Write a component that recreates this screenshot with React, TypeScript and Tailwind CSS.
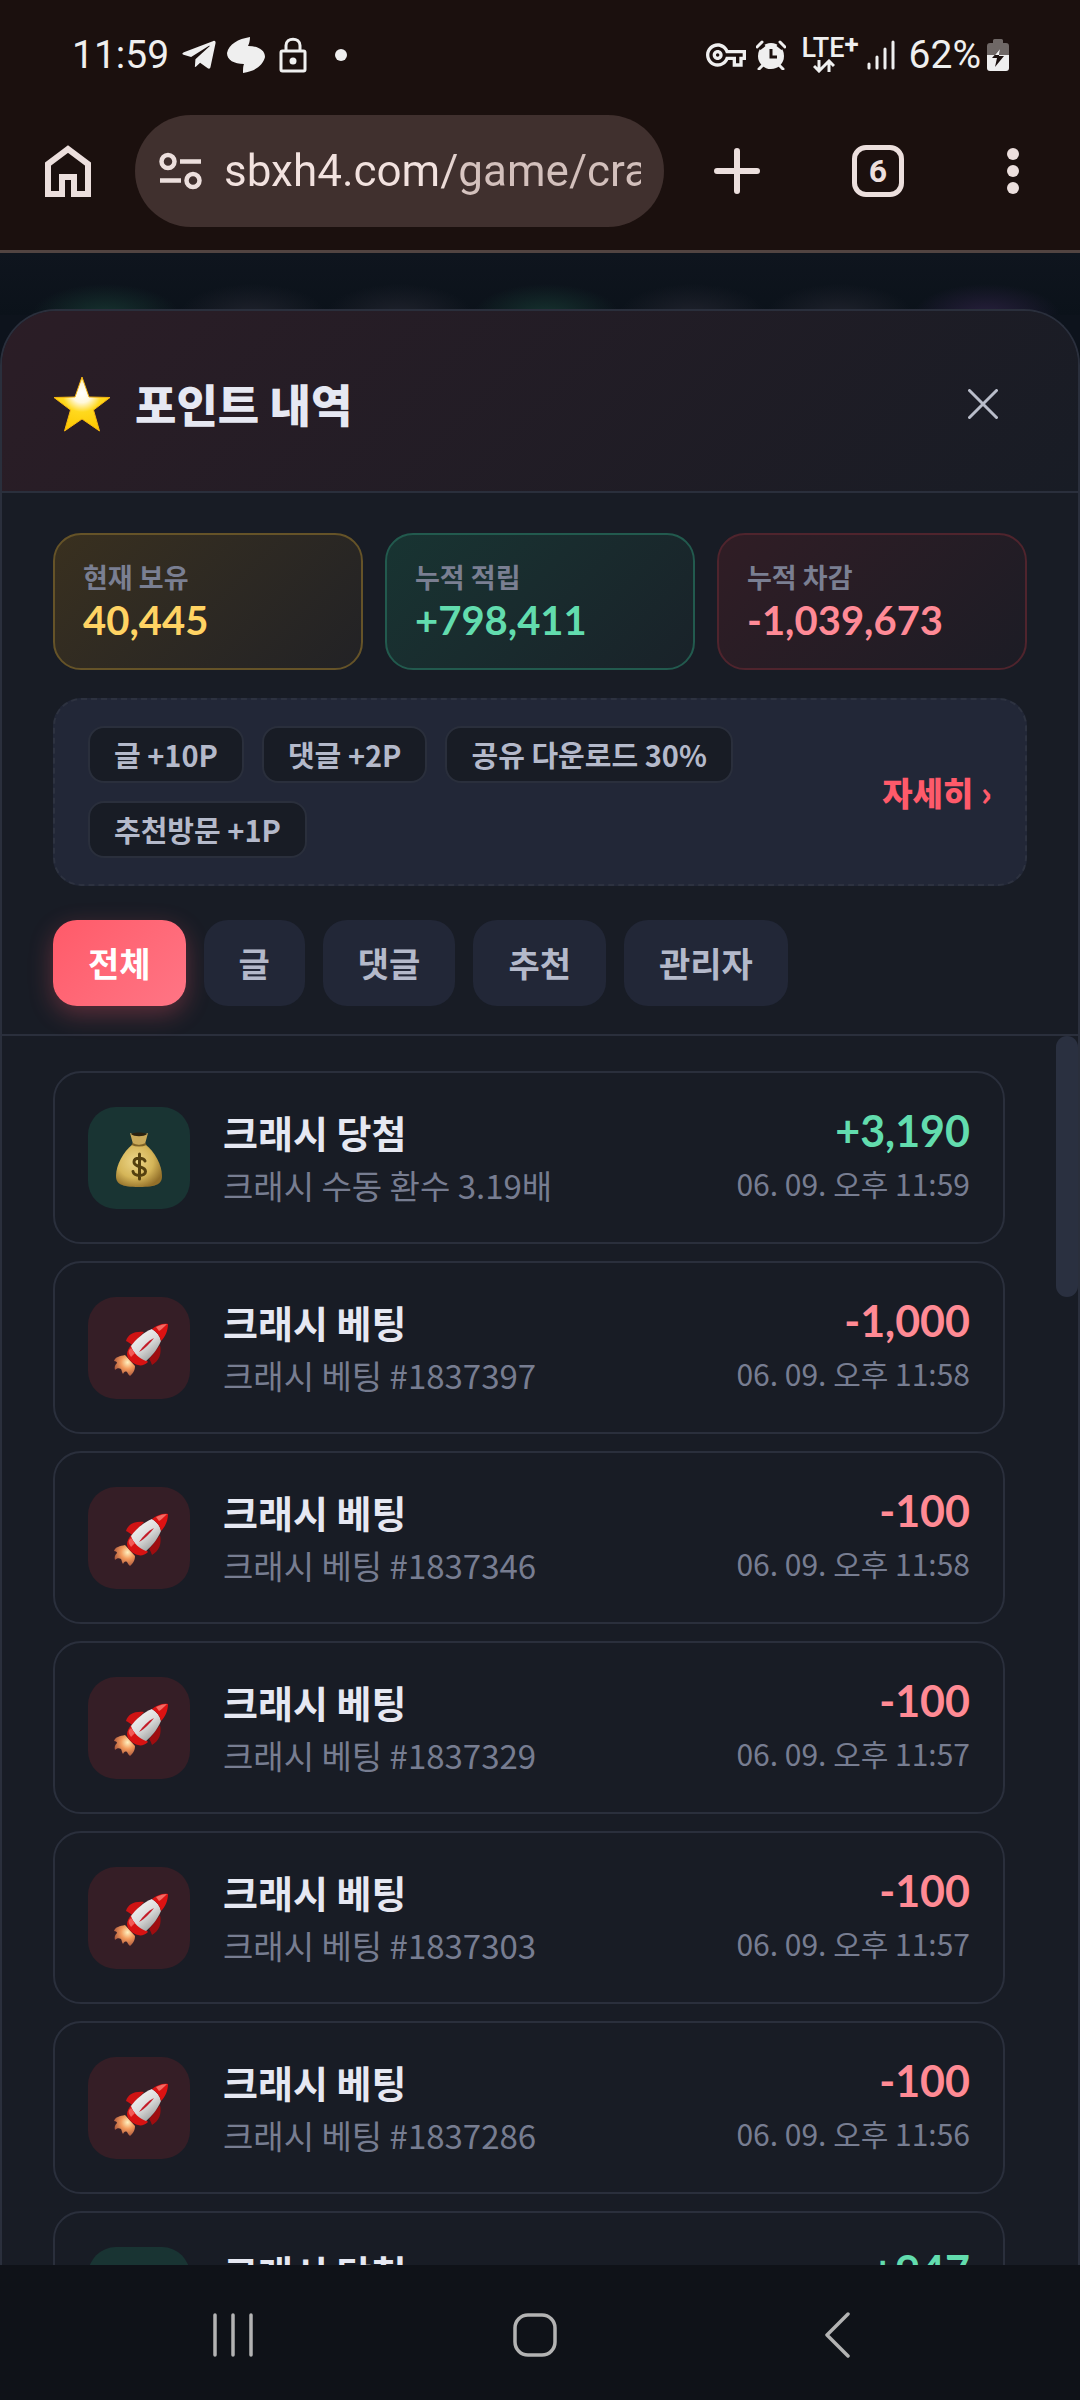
import React, { useState } from 'react';
import { FaTelegramPlane } from 'react-icons/fa';
import { MdOutlineVpnKey } from 'react-icons/md';

type Entry = {
  id: number;
  kind: 'win' | 'bet';
  title: string;
  detail: string;
  amount: string;
  time: string;
};

const entries: Entry[] = [
  { id: 1, kind: 'win', title: '크래시 당첨', detail: '크래시 수동 환수 3.19배', amount: '+3,190', time: '06. 09. 오후 11:59' },
  { id: 2, kind: 'bet', title: '크래시 베팅', detail: '크래시 베팅 #1837397', amount: '-1,000', time: '06. 09. 오후 11:58' },
  { id: 3, kind: 'bet', title: '크래시 베팅', detail: '크래시 베팅 #1837346', amount: '-100', time: '06. 09. 오후 11:58' },
  { id: 4, kind: 'bet', title: '크래시 베팅', detail: '크래시 베팅 #1837329', amount: '-100', time: '06. 09. 오후 11:57' },
  { id: 5, kind: 'bet', title: '크래시 베팅', detail: '크래시 베팅 #1837303', amount: '-100', time: '06. 09. 오후 11:57' },
  { id: 6, kind: 'bet', title: '크래시 베팅', detail: '크래시 베팅 #1837286', amount: '-100', time: '06. 09. 오후 11:56' },
  { id: 7, kind: 'win', title: '크래시 당첨', detail: '크래시 수동 환수 9.47배', amount: '+947', time: '06. 09. 오후 11:56' },
];

const stats = [
  {
    label: '현재 보유',
    value: '40,445',
    box: 'border-[#655328] bg-linear-135 from-[#39301f] to-[#222225]',
    text: 'text-[#ffd363]',
  },
  {
    label: '누적 적립',
    value: '+798,411',
    box: 'border-[#225a4e] bg-linear-135 from-[#183432] to-[#192229]',
    text: 'text-[#62dcae]',
  },
  {
    label: '누적 차감',
    value: '-1,039,673',
    box: 'border-[#4f242d] bg-linear-135 from-[#301d25] to-[#1c1c25]',
    text: 'text-[#ff8a96]',
  },
];

const rules = ['글 +10P', '댓글 +2P', '공유 다운로드 30%', '추천방문 +1P'];
const tabs = ['전체', '글', '댓글', '추천', '관리자'];

const StarIcon: React.FC = () => (
  <svg viewBox="0 0 58 56" className="h-14 w-[58px]" aria-hidden="true">
    <defs>
      <radialGradient id="starFill" cx="0.5" cy="0.3" r="0.7">
        <stop offset="0" stopColor="#ffffff" />
        <stop offset="0.25" stopColor="#fff8dc" />
        <stop offset="0.5" stopColor="#ffd91e" />
        <stop offset="1" stopColor="#fdc800" />
      </radialGradient>
    </defs>
    <path
      d="M29 1 L36 21 L57 21.500 L40.500 34 L46.500 55 L29 43 L11.500 55 L17.500 34 L1 21.500 L22 21 Z"
      fill="url(#starFill)"
      stroke="#f5b512"
      strokeWidth="1"
      strokeLinejoin="round"
    />
  </svg>
);

const MoneyBagIcon: React.FC = () => (
  <svg viewBox="0 0 48 56" className="h-14 w-12" aria-hidden="true">
    <defs>
      <radialGradient id="bagFill" cx="0.42" cy="0.4" r="0.65">
        <stop offset="0" stopColor="#ecd68a" />
        <stop offset="0.6" stopColor="#d5b558" />
        <stop offset="1" stopColor="#93702a" />
      </radialGradient>
    </defs>
    <path d="M18 12 C8 20 1 33 1 44 C1 52 6 55 24 55 C42 55 47 52 47 44 C47 33 40 20 30 12 Z" fill="url(#bagFill)" />
    <path d="M15 1 C20 3 28 3 33 1 L30 12 L18 12 Z" fill="#c9a95a" />
    <path d="M16 2 C20 0 28 0 32 2 C29 5 19 5 16 2 Z" fill="#2a2110" />
    <path d="M17 12 C21 14 27 14 31 12" stroke="#7d6228" strokeWidth="2" fill="none" />
    <path
      d="M30 29 C29 25.500 19 24.500 19 30 C19 36 30.500 33.500 30.500 39.500 C30.500 45 19 44.500 18 39.500 M24.500 22 V47"
      stroke="#54400f"
      strokeWidth="3"
      strokeLinecap="round"
      fill="none"
    />
  </svg>
);

const RocketIcon: React.FC = () => (
  <svg viewBox="0 0 56 54" className="h-[54px] w-14" aria-hidden="true">
    <defs>
      <linearGradient id="hull" x1="0.2" y1="0.1" x2="0.8" y2="0.9">
        <stop offset="0" stopColor="#f2f2f2" />
        <stop offset="0.5" stopColor="#dcdcdc" />
        <stop offset="1" stopColor="#9d9d9d" />
      </linearGradient>
      <radialGradient id="flame" cx="0.65" cy="0.35" r="0.7">
        <stop offset="0" stopColor="#fff1c0" />
        <stop offset="0.45" stopColor="#f29a5c" />
        <stop offset="1" stopColor="#a8553c" />
      </radialGradient>
    </defs>
    <path d="M12 32 C7 33 2 34 1 38 C3 38 4 39 4 40 C2 42 1 44 2 47 C4 45 6 45 8 46 C9 48 9 50 10 51 C11 49 12 48 14 49 C15 51 16 52 17 53 C21 50 22 46 22 43 Z" fill="url(#flame)" />
    <path d="M13 18 C15 11 22 8 31 9 L19 22 C17 20 15 19 13 18 Z" fill="#cf1414" />
    <path d="M47 22 C49 31 46 38 39 42 C38 39 37 37 36 36 Z" fill="#9e0d10" />
    <path d="M14 31 C14 28 16 25 18 22 L35 39 C32 42 28 43 25 42 C20 41 14 36 14 31 Z" fill="#d81212" />
    <path d="M18 23 C22 17 31 9 39 6 C44 9 47 13 48 18 C44 27 39 33 33 38 C27 36 20 30 18 23 Z" fill="url(#hull)" />
    <path d="M39 6 C44 2 50 0 55 1 C55 8 52 14 48 18 C47 13 44 9 39 6 Z" fill="#dd1212" />
    <path d="M43 4 C47 2 51 1 54 1 C51 4 48 7 46 8 Z" fill="#f26a62" />
    <path d="M26 29 C30 23 35 18 41 15 C37 20 32 26 26 29 Z" fill="#c41d2a" />
    <path d="M16 27 C15 29 16 31 18 34 L22 30 L18 25 Z" fill="#f35a55" />
  </svg>
);

const StatusBar: React.FC = () => (
  <div className="flex h-[110px] items-center justify-between pr-[71px] pl-[72px] font-['Roboto','Noto_Sans_CJK_KR',sans-serif] text-[#efefef]">
    <div className="flex items-center">
      <span className="w-[108px] text-[39px] leading-[48px]">11:59</span>
      <FaTelegramPlane className="size-[38px]" aria-hidden="true" />
      <svg viewBox="0 0 40 38" className="ml-2 h-[38px] w-10" aria-hidden="true">
        <path d="M24 1 C24 5 23 8 22 10 C32 10 39 14 39 21 C37 29 30 35 17 37 C17 33 17 30 18 28 C8 28 1 24 1 17 C3 8 12 3 24 1 Z" fill="currentColor" />
      </svg>
      <svg viewBox="0 0 28 36" className="ml-[13px] h-9 w-7" fill="none" stroke="currentColor" strokeWidth="3" aria-hidden="true">
        <rect x="2" y="14" width="24" height="20" rx="1.500" />
        <path d="M7 14 V8.500 C7 0 21 0 21 8.500 V14" />
        <circle cx="14" cy="24" r="3.500" fill="currentColor" stroke="none" />
      </svg>
      <span className="ml-7 size-3 rounded-full bg-[#efefef]" />
    </div>
    <div className="flex items-center">
      <MdOutlineVpnKey className="size-10" aria-hidden="true" />
      <svg viewBox="0 0 30 30" className="ml-2.5 size-[30px]" aria-hidden="true">
        <circle cx="15" cy="16" r="13" fill="currentColor" />
        <path d="M2 7 L7 3 M28 7 L23 3" stroke="#1b100e" strokeWidth="8" />
        <path d="M1 7 L6 2 M29 7 L24 2" stroke="currentColor" strokeWidth="3" strokeLinecap="round" />
        <path d="M7 25 L3 29 M23 25 L27 29" stroke="currentColor" strokeWidth="3" strokeLinecap="round" />
        <path d="M15 9 V17 H21" stroke="#1b100e" strokeWidth="3" fill="none" />
      </svg>
      <div className="ml-[15px] flex flex-col items-center">
        <span className="flex text-[27px] leading-[22px] font-medium">
          LTE<span className="text-[26px] leading-[14px] font-bold">+</span>
        </span>
        <svg viewBox="0 0 22 14" className="mr-3 h-3.5 w-[22px]" fill="none" stroke="currentColor" strokeWidth="3" aria-hidden="true">
          <path d="M6 1 V12 M1 7 L6 12 L11 7 M16 13 V2 M11 7 L16 2 L21 7" />
        </svg>
      </div>
      <svg viewBox="0 0 28 30" className="ml-2 h-[30px] w-7" stroke="currentColor" strokeWidth="3" strokeLinecap="round" aria-hidden="true">
        <path d="M2 24 V28 M10 17 V28 M18 9 V28 M26 2 V28" />
      </svg>
      <span className="ml-3.5 text-[39px] leading-[48px]">62%</span>
      <svg viewBox="0 0 22 32" className="ml-1.5 h-8 w-[22px]" aria-hidden="true">
        <path d="M6 4 V1.500 Q6 0 7.500 0 H14.500 Q16 0 16 1.500 V4 H19 Q22 4 22 7 V16 H0 V7 Q0 4 3 4 Z" fill="#6f6866" />
        <path d="M0 16 H22 V29 Q22 32 19 32 H3 Q0 32 0 29 Z" fill="currentColor" />
        <path d="M13 10 L5 19 H10 L8 28 L17 17 H12 Z" fill="#1b100e" />
        <path d="M13 10 L8 16 H12 Z" fill="#efefef" />
      </svg>
    </div>
  </div>
);

const BrowserToolbar: React.FC = () => {
  const [url, setUrl] = useState('sbxh4.com/game/crash');

  return (
    <div className="flex items-center border-b-3 border-[#524441] pt-[5px] pb-[23px] text-[#ecdfdd]">
      <button type="button" aria-label="홈" className="flex h-28 w-[135px] shrink-0 items-center justify-center">
        <svg viewBox="0 0 46 52" className="h-[52px] w-[46px]" fill="none" stroke="currentColor" strokeWidth="6" aria-hidden="true">
          <path d="M3 49 V19 L23 4 L43 19 V49 H29 V32 H17 V49 Z" />
        </svg>
      </button>
      <div className="flex h-28 min-w-0 flex-1 items-center rounded-full bg-[#40302e] pr-[23px] pl-6">
        <svg viewBox="0 0 44 38" className="h-[38px] w-11 shrink-0" fill="none" stroke="currentColor" strokeWidth="4.500" aria-hidden="true">
          <circle cx="9" cy="9.500" r="6.500" />
          <path d="M21 9.500 H42 M1 28.500 H22" />
          <circle cx="34" cy="28.500" r="6.500" />
        </svg>
        <input
          type="text"
          aria-label="주소"
          value={url}
          onChange={(e) => setUrl(e.target.value)}
          className="ml-[21px] h-16 w-full min-w-0 bg-[linear-gradient(90deg,#f2e2df_0,#f2e2df_215px,#d3c0bc_245px)] bg-clip-text font-['Roboto','Noto_Sans_CJK_KR',sans-serif] text-[44px] text-transparent outline-none"
        />
      </div>
      <button type="button" aria-label="새 탭" className="flex h-28 w-[146px] shrink-0 items-center justify-center">
        <svg viewBox="0 0 46 46" className="size-[46px]" stroke="currentColor" strokeWidth="6" strokeLinecap="round" aria-hidden="true">
          <path d="M23 3 V43 M3 23 H43" />
        </svg>
      </button>
      <button type="button" aria-label="탭 6개" className="flex h-28 w-[136px] shrink-0 items-center justify-center">
        <span className="flex size-[52px] items-center justify-center rounded-[14px] border-[5px] border-[#ecdfdd] font-['Roboto','Noto_Sans_CJK_KR',sans-serif] text-[32px] leading-none font-bold">
          6
        </span>
      </button>
      <button type="button" aria-label="메뉴" className="flex h-28 w-[134px] shrink-0 flex-col items-center justify-center gap-[5px]">
        <span className="size-3 rounded-full bg-[#ecdfdd]" />
        <span className="size-3 rounded-full bg-[#ecdfdd]" />
        <span className="size-3 rounded-full bg-[#ecdfdd]" />
      </button>
    </div>
  );
};

const HistoryRow: React.FC<{ entry: Entry }> = ({ entry }) => {
  const win = entry.kind === 'win';

  return (
    <li className="flex shrink-0 items-center rounded-[28px] border-2 border-[#2a2f3c] px-[33px] py-[31px]">
      <div className={`flex size-[102px] shrink-0 items-center justify-center rounded-[28px] ${win ? 'bg-[#193433] pt-1' : 'bg-[#351e26] pt-1 pl-1'}`}>
        {win ? <MoneyBagIcon /> : <RocketIcon />}
      </div>
      <div className="ml-[33px] min-w-0 flex-1">
        <div className="truncate text-[38px] leading-[55px] font-bold text-[#e6e8f2]">{entry.title}</div>
        <div className="truncate text-[33px] leading-[52px] text-[#777d91]">{entry.detail}</div>
      </div>
      <div className="shrink-0 text-right">
        <div className={`font-['Lato','Noto_Sans_CJK_KR',sans-serif] text-[43px] leading-[50px] font-bold ${win ? 'text-[#62dcae]' : 'text-[#ff8a94]'}`}>
          {entry.amount}
        </div>
        <div className="text-[30px] leading-[54px] text-[#777d91]">{entry.time}</div>
      </div>
    </li>
  );
};

const PointHistory: React.FC = () => {
  const [active, setActive] = useState('전체');

  return (
    <section className="relative flex min-h-0 flex-1 flex-col overflow-hidden rounded-t-[56px] border-2 border-b-0 border-[#2a2f3c] bg-[#181c25]">
      {/* Header */}
      <div className="flex items-center justify-between border-b-2 border-[#2a2f3c] bg-linear-135 from-[#2b1d26] to-[#181c25] px-[51px] pt-[59px] pb-[53px]">
        <div className="flex items-center gap-6">
          <StarIcon />
          <h1 className="text-[45px] leading-[68px] font-black text-[#e6e8f2]">포인트 내역</h1>
        </div>
        <button type="button" aria-label="닫기" className="flex size-[68px] items-center justify-center text-[#b9bdca]">
          <svg viewBox="0 0 30 30" className="mr-5 size-[30px]" stroke="currentColor" strokeWidth="3" strokeLinecap="round" aria-hidden="true">
            <path d="M1.500 1.500 L28.500 28.500 M28.500 1.500 L1.500 28.500" />
          </svg>
        </button>
      </div>

      {/* Summary and filters */}
      <div className="border-b-2 border-[#2a2f3c] px-[51px] pt-10 pb-7">
        <div className="grid grid-cols-3 gap-[22px]">
          {stats.map((s) => (
            <div key={s.label} className={`rounded-[28px] border-2 px-7 pt-[22px] pb-[25px] ${s.box}`}>
              <div className="text-[27px] leading-10 font-bold text-[#7a7f92]">{s.label}</div>
              <div className={`font-['Lato','Noto_Sans_CJK_KR',sans-serif] text-[40px] leading-[46px] font-bold ${s.text}`}>{s.value}</div>
            </div>
          ))}
        </div>

        <div className="mt-7 flex items-center justify-between rounded-[28px] border-2 border-dashed border-[#2d3240] bg-[#222737] px-[33px] py-[26px]">
          <div className="flex min-w-0 flex-1 flex-wrap gap-[18px]">
            {rules.map((rule) => (
              <span key={rule} className="rounded-2xl border-2 border-[#2a2f3c] bg-[#181c25] px-6 py-1.5 text-[29px] leading-[41px] font-semibold text-[#b4b9ca]">
                {rule}
              </span>
            ))}
          </div>
          <a href="#rules" className="ml-6 shrink-0 text-[33px] leading-[46px] font-black text-[#ff5a6a]">
            자세히 ›
          </a>
        </div>

        <div className="mt-[34px] flex gap-[18px]">
          {tabs.map((tab) => (
            <button
              key={tab}
              type="button"
              onClick={() => setActive(tab)}
              className={`h-[86px] rounded-3xl px-[35px] text-[34px] leading-[50px] font-bold ${
                tab === active
                  ? 'bg-linear-135 from-[#ff5a69] to-[#ff7585] text-white shadow-[0_8px_24px_rgba(255,90,106,0.3)]'
                  : 'bg-[#222737] text-[#b4b9ca]'
              }`}
            >
              {tab}
            </button>
          ))}
        </div>
      </div>

      {/* History list */}
      <div className="relative min-h-0 flex-1 overflow-hidden">
        <ul className="flex flex-col gap-[17px] pt-[35px] pr-[73px] pl-[51px]">
          {entries.map((entry) => (
            <HistoryRow key={entry.id} entry={entry} />
          ))}
        </ul>
        <div className="absolute top-0 right-0 h-[261px] w-[22px] rounded-full bg-[#2a3040]" />
      </div>
    </section>
  );
};

const NavigationBar: React.FC = () => (
  <nav className="flex h-[135px] shrink-0 items-center justify-center bg-[#0f1218] pt-1 pr-[10px] text-[#b3b3b3]">
    <button type="button" aria-label="최근 앱" className="flex h-full w-[302px] items-center justify-center">
      <svg viewBox="0 0 40 44" className="h-11 w-10" stroke="currentColor" strokeWidth="3.500" strokeLinecap="round" aria-hidden="true">
        <path d="M2 2 V42 M20 2 V42 M38 2 V42" />
      </svg>
    </button>
    <button type="button" aria-label="홈 화면" className="flex h-full w-[302px] items-center justify-center">
      <svg viewBox="0 0 44 44" className="size-11" fill="none" stroke="currentColor" strokeWidth="3.500" aria-hidden="true">
        <rect x="2" y="2" width="40" height="40" rx="13" />
      </svg>
    </button>
    <button type="button" aria-label="뒤로" className="flex h-full w-[302px] items-center justify-center">
      <svg viewBox="0 0 26 46" className="h-[46px] w-[26px]" fill="none" stroke="currentColor" strokeWidth="3.500" strokeLinecap="round" strokeLinejoin="round" aria-hidden="true">
        <path d="M24 2 L3 23 L24 44" />
      </svg>
    </button>
  </nav>
);

export default function App() {
  return (
    <div className="flex h-screen flex-col overflow-hidden bg-[#0d131c] font-['Noto_Sans_CJK_KR',sans-serif]">
      <header className="shrink-0 bg-[#1b100e]">
        <StatusBar />
        <BrowserToolbar />
      </header>
      <main className="relative flex min-h-0 flex-1 flex-col pt-14">
        {/* Blurred page behind the sheet */}
        <div className="absolute inset-x-0 top-0 flex h-[62px] bg-linear-to-b from-[#0f151e] to-[#0b121a] pr-5 pl-8" aria-hidden="true">
          <div className="flex-1 bg-[radial-gradient(ellipse_50%_50%_at_bottom,#16332f,transparent)]" />
          <div className="flex-1 bg-[radial-gradient(ellipse_50%_50%_at_bottom,#1f222c,transparent)]" />
          <div className="flex-1 bg-[radial-gradient(ellipse_50%_50%_at_bottom,#1f222c,transparent)]" />
          <div className="flex-1 bg-[radial-gradient(ellipse_50%_50%_at_bottom,#16332f,transparent)]" />
          <div className="flex-1 bg-[radial-gradient(ellipse_50%_50%_at_bottom,#1f222c,transparent)]" />
          <div className="flex-1 bg-[radial-gradient(ellipse_50%_50%_at_bottom,#1f222c,transparent)]" />
          <div className="flex-1 bg-[radial-gradient(ellipse_50%_50%_at_bottom,#281f3d,transparent)]" />
        </div>
        <PointHistory />
      </main>
      <NavigationBar />
    </div>
  );
}
